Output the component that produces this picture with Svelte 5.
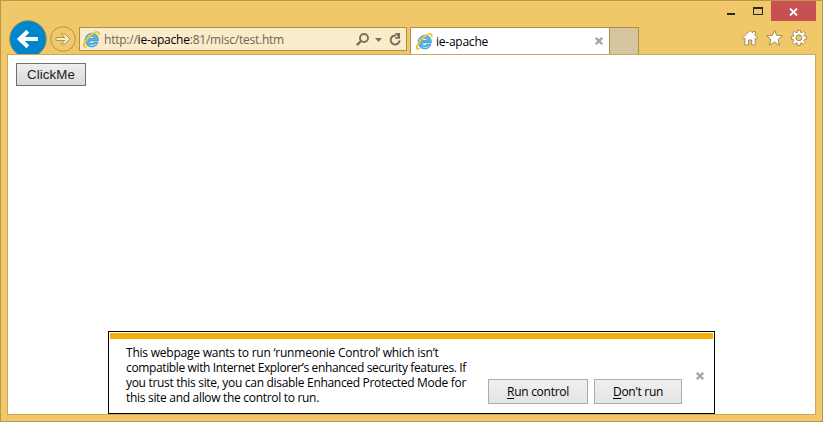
<script>
  const message = [
    { text: 'This webpage wants to run ‘runmeonie Control’ which isn’t', width: 312.5 },
    { text: 'compatible with Internet Explorer’s enhanced security features. If', width: 340 },
    { text: 'you trust this site, you can disable Enhanced Protected Mode for', width: 340 },
    { text: 'this site and allow the control to run.', width: 193 }
  ];

  // Spreads a line's letters so the line takes exactly the given width.
  function fit(node, width) {
    const apply = () => {
      node.style.letterSpacing = '0px';
      const natural = node.getBoundingClientRect().width;
      node.style.letterSpacing = `${(width - natural) / node.textContent.length}px`;
    };
    apply();
    document.fonts?.ready.then(apply);
  }
</script>

{#snippet ie()}
  <svg class="ie" width="17" height="17" viewBox="0 0 17 17">
    <path fill-rule="evenodd" d="M15.4 9.9H6.1C6.3 12.6 9.4 13.3 10.7 11.5H15C13.9 14.4 11.6 15.9 8.9 15.9C5 15.9 2.2 13 2.2 9.2C2.2 5.2 5.1 2.3 8.9 2.3C13 2.3 15.6 5.4 15.4 9.9ZM6.2 7.4H11.3C11 4.6 6.6 4.6 6.2 7.4Z" fill="#56b6e8" stroke="#2c86be" stroke-width=".7"/>
    <path d="M3.4 8C4.2 5 6.8 3.4 9.6 3.6M7 14.2C9.2 15.2 11.6 14.6 13 12.6" fill="none" stroke="#a2e0fa" stroke-width="1"/>
    <path d="M3.6 15.4C1.4 16.6.3 15.8 1 13.2C2.2 9.2 7 3.9 11 1.9C14.7 0 16.4 1 15.4 4" fill="none" stroke="#dca21c" stroke-width="1.6"/>
    <path d="M3.4 15.3C1.4 16.3.6 15.4 1.3 13C2.4 9.4 7.1 4.1 11 2.1C14.4.3 16 1.1 15.2 3.8" fill="none" stroke="#ffd52e" stroke-width="1.1"/>
  </svg>
{/snippet}

{#snippet cross()}
  <svg class="cross" width="8" height="8" viewBox="0 0 8 8"><path d="M.8.8 7.2 7.2M7.2.8.8 7.2" stroke="#a7a7a7" stroke-width="2.3"/></svg>
{/snippet}

<div class="window">
  <header>
    <div class="caption">
      <svg class="minmax" width="40" height="10" viewBox="0 0 40 10">
        <path d="M1 6h8v2H1z" fill="#262626"/>
        <path fill-rule="evenodd" d="M27 0h10v8H27zM28 2v5h8V2z" fill="#262626"/>
      </svg>
      <div class="close"><svg width="9" height="8" viewBox="0 0 9 8"><path d="M1 .5 8 7.5M8 .5 1 7.5" stroke="#fff" stroke-width="1.8"/></svg></div>
    </div>
    <nav>
      <svg class="back" width="38" height="38" viewBox="0 0 38 38">
        <circle cx="19" cy="19" r="18.2" fill="#0086ca" stroke="#7c8b68" stroke-width="1"/>
        <path d="M28.8 19H11M18.8 11.2 10.7 19 18.8 26.8" fill="none" stroke="#fff" stroke-width="4"/>
      </svg>
      <svg class="forward" width="26" height="26" viewBox="0 0 26 26">
        <circle cx="13" cy="13" r="12.3" fill="#f0c96f" stroke="#b4924a"/>
        <path d="M6 11.5H14.8L11.3 8H15L20 13L15 18H11.3L14.8 14.5H6Z" fill="#faebc8" stroke="#b4924a"/>
      </svg>
      <div class="address">
        {@render ie()}
        <div class="url"><span use:fit={180}>http://<b>ie-apache</b>:81/misc/test.htm</span></div>
        <svg class="tools" width="46" height="16" viewBox="0 0 46 16">
          <circle cx="8" cy="6" r="4" fill="none" stroke="#7a6f5a" stroke-width="1.9"/>
          <path d="M5 9 .9 13.1" stroke="#7a6f5a" stroke-width="2.4"/>
          <path d="M19 6h7l-3.5 4z" fill="#7a6f5a"/>
          <path d="M43.6 8.4A4.5 4.5 0 1 1 40 3.6" fill="none" stroke="#7a6f5a" stroke-width="2"/>
          <path d="M39 1h5v5.8h-4.7V5H42z" fill="#7a6f5a"/>
        </svg>
      </div>
      <div class="tab">
        {@render ie()}
        <div class="title"><span use:fit={52}>ie-apache</span></div>
        {@render cross()}
      </div>
      <div class="newtab"></div>
      <svg class="commands" width="66" height="18" viewBox="0 0 66 18">
        <g fill="#fff" stroke="#a68b50">
          <path d="M8 1.3 10.6 3.9V2.5H13.2V6.4L15.7 9L14.5 10.3L13.2 9.2V16H9.7V11H6.7V16H2.8V9.2L1.6 10.3L.5 9Z"/>
          <path d="M32.5 1 34.7 6.4 40.5 6.8 36 10.6 37.5 16.3 32.5 13.1 27.5 16.3 29 10.6 24.5 6.8 30.3 6.4Z"/>
          <path fill-rule="evenodd" d="M55.4 1.2h3v2l1.4.6 1.5-1.5 2.1 2.1-1.5 1.5.6 1.4h2v3h-2l-.6 1.4 1.5 1.5-2.1 2.1-1.5-1.5-1.4.6v2h-3v-2l-1.4-.6-1.5 1.5-2.1-2.1 1.5-1.5-.6-1.4h-2v-3h2l.6-1.4-1.5-1.5 2.1-2.1 1.5 1.5 1.4-.6zM56.9 5.8a3 3 0 1 0 0 6 3 3 0 0 0 0-6z"/>
        </g>
      </svg>
    </nav>
  </header>
  <main>
    <button class="clickme"><span use:fit={48}>ClickMe</span></button>
    <section class="notice">
      <div class="stripe"></div>
      <div class="body">
        <div class="message">
          {#each message as line}
            <div><span use:fit={line.width}>{line.text}</span></div>
          {/each}
        </div>
        <button class="run"><span use:fit={62}><u>R</u>un control</span></button>
        <button class="dont"><span use:fit={50}><u>D</u>on't run</span></button>
        {@render cross()}
      </div>
    </section>
  </main>
</div>

<style>
  .window {
    box-sizing: border-box;
    width: 823px;
    height: 422px;
    border: 1px solid #b89850;
    background: #f0c869;
    font: 12px/15px "Open Sans", "Noto Sans", sans-serif;
    color: #000;
    overflow: hidden;
  }
  svg { display: block; flex: none; }
  span { display: inline-block; vertical-align: top; }
  header { height: 53px; overflow: hidden; }
  .caption { display: flex; justify-content: flex-end; height: 19px; padding-right: 6px; }
  .minmax { margin: 6px 5px 0 0; }
  .close { display: flex; align-items: center; justify-content: center; width: 45px; height: 20px; background: #c75050; flex: none; }
  .close svg { margin-top: 1px; }
  nav { display: flex; align-items: flex-start; height: 34px; padding-left: 8px; }
  .forward { margin: 6px 0 0 3px; }
  .address, .tab, .newtab { box-sizing: border-box; flex: none; margin-top: 7px; border: 1px solid #af9047; }
  .address { display: flex; width: 328px; height: 24px; margin-left: 3px; background: #faebca; color: #6d6658; }
  .address .ie { margin: 3px 0 0 3px; }
  .url { flex: 1; margin: 4px 0 0 4px; white-space: nowrap; }
  .url b { font-weight: 400; color: #000; }
  .tools { margin: 4px 4px 0 0; }
  .tab { display: flex; width: 200px; height: 27px; margin-left: 3px; border-bottom: 0; background: #fff; }
  .tab .ie { margin: 5px 0 0 5px; }
  .title { flex: 1; margin: 6px 0 0 3px; white-space: nowrap; }
  .tab .cross { margin: 9px 6px 0 0; }
  .newtab { width: 30px; height: 27px; margin-left: -1px; border-bottom: 0; background: #d6c6a0; }
  .commands { margin: 9px 0 0 103px; }
  main {
    box-sizing: border-box;
    display: flex;
    flex-direction: column;
    justify-content: space-between;
    width: 809px;
    height: 361px;
    margin-left: 6px;
    border: 1px solid #caa75b;
    background: #fff;
  }
  button { box-sizing: border-box; padding: 0; white-space: nowrap; color: #000; }
  .clickme {
    width: 70px;
    height: 23px;
    margin: 8px 0 0 8px;
    border: 1px solid #707070;
    background: linear-gradient(#efefef, #d8d8d8);
    color: #222;
    font: 13.3px/19px "Liberation Sans", Arial, sans-serif;
  }
  .notice { box-sizing: border-box; width: 607px; height: 83px; margin-left: 100px; border: 1px solid #000; background: #fff; padding: 1px; }
  .stripe { height: 6px; background: #f4b000; }
  .body { display: flex; }
  .message { width: 362px; padding: 6px 0 0 16px; box-sizing: border-box; margin-right: 16px; white-space: nowrap; }
  .run, .dont { height: 25px; margin-top: 40px; border: 1px solid #acacac; background: linear-gradient(#f0f0f0, #e4e4e4); font: inherit; flex: none; }
  .run { width: 100px; margin-right: 6px; }
  .dont { width: 88px; margin-right: 14px; }
  u { text-underline-offset: 2px; }
  .body .cross { margin-top: 33px; }
</style>
